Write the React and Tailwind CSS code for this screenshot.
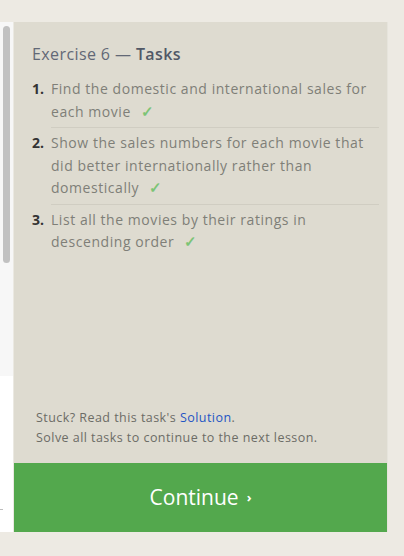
import React from 'react';

const tasks = [
  { n: 1, lines: 'Find the domestic and international sales for each movie' },
  { n: 2, lines: 'Show the sales numbers for each movie that did better internationally rather than domestically' },
  { n: 3, lines: 'List all the movies by their ratings in descending order' },
];

export default function App() {
  return (
    <div
      className="w-[404px] h-[556px] bg-[#edeae3] pt-[22px] flex"
      style={{ fontFamily: '"Open Sans", "Noto Sans", sans-serif' }}
    >
      {/* editor strip on the left */}
      <div className="w-[14px] h-[510px] flex flex-col border-r border-[#ebe9e2]">
        <div className="h-[354px] bg-[#f7f7f7] pl-[3px] pt-[4px]">
          <div className="w-[7px] h-[237px] rounded-full bg-[#c1c1c1]" />
        </div>
        <div className="flex-1 bg-white flex flex-col justify-end pb-[22px]">
          <div className="w-[3px] h-[1px] bg-[#bdbdbd]" />
        </div>
      </div>

      {/* tasks panel */}
      <div className="w-[374px] h-[510px] bg-[#dedbd0] border-r border-[#e6e4dc] flex flex-col">
        <div className="pl-[18px] pr-[8px] pt-[21px]">
          <h2 className="text-[16px] leading-[22px] tracking-[0.4px] text-[#626876]">
            Exercise 6 — <span className="font-semibold text-[#515866]">Tasks</span>
          </h2>
          <ol className="mt-[13px]">
            {tasks.map((t, i) => (
              <li key={t.n} className="flex">
                <span className="w-[19px] shrink-0 text-[14px] leading-[22.5px] font-bold text-[#333333]">
                  {t.n}.
                </span>
                <p
                  className={
                    'flex-1 text-[14px] leading-[22.5px] tracking-[0.55px] text-[#7f7f78] pb-[4px] ' +
                    (i < tasks.length - 1 ? 'border-b border-[#d0cdc2] mb-[4px]' : '')
                  }
                >
                  {t.lines}
                  <span className="ml-[10px] text-[15px] leading-[0] font-semibold text-[#7cc476]">✓</span>
                </p>
              </li>
            ))}
          </ol>
        </div>

        <div className="flex-1" />

        <div className="pl-[22px] pb-[15px] text-[12.5px] leading-[20px] tracking-[0.45px] text-[#6c6c66]">
          <p>
            Stuck? Read this task's <span className="text-[#1f55c4]">Solution</span>.
          </p>
          <p>Solve all tasks to continue to the next lesson.</p>
        </div>

        <button className="h-[69px] w-full bg-[#53a84d] text-white text-[21px] flex items-center justify-center gap-[8px]">
          <span>Continue</span>
          <span className="text-[13px] font-bold">›</span>
        </button>
      </div>
    </div>
  );
}
